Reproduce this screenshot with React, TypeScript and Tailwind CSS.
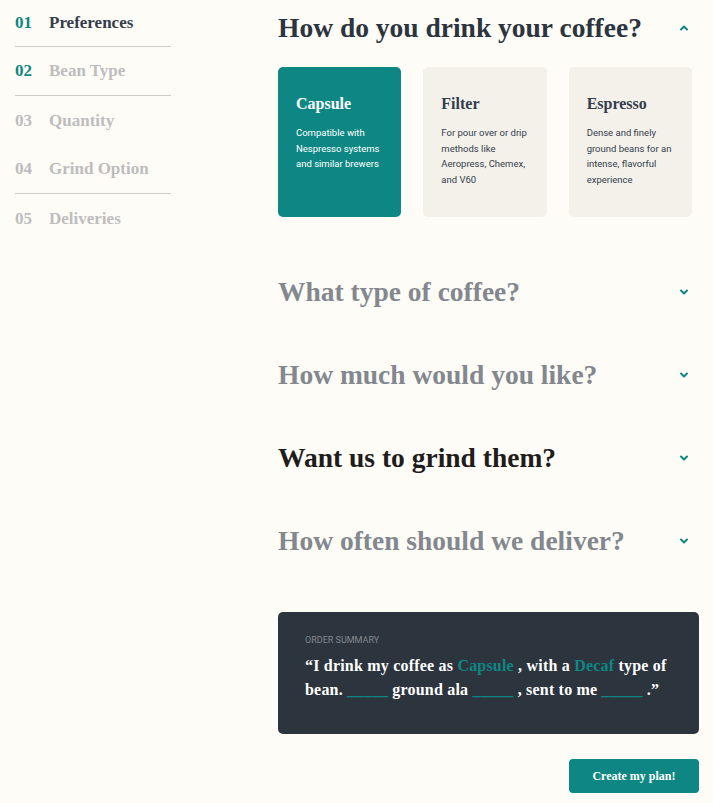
import { ChevronDown, ChevronUp } from 'lucide-react';

const serif = { fontFamily: '"Liberation Serif", "DejaVu Serif", serif' };

const steps = [
  { num: '01', label: 'Preferences', numOn: true, labelOn: true, line: true },
  { num: '02', label: 'Bean Type', numOn: true, labelOn: false, line: true },
  { num: '03', label: 'Quantity', numOn: false, labelOn: false, line: false },
  { num: '04', label: 'Grind Option', numOn: false, labelOn: false, line: true },
  { num: '05', label: 'Deliveries', numOn: false, labelOn: false, line: false },
];

const options = [
  { title: 'Capsule', text: 'Compatible with Nespresso systems and similar brewers', active: true },
  { title: 'Filter', text: 'For pour over or drip methods like Aeropress, Chemex, and V60', active: false },
  { title: 'Espresso', text: 'Dense and finely ground beans for an intense, flavorful experience', active: false },
];

const questions = [
  { q: 'What type of coffee?', dark: false },
  { q: 'How much would you like?', dark: false },
  { q: 'Want us to grind them?', dark: true },
  { q: 'How often should we deliver?', dark: false },
];

function Blank() {
  return <span className="text-[#0E8784]">_____</span>;
}

export default function App() {
  return (
    <div className="min-h-[803px] bg-[#FEFCF7] flex" style={{ fontFamily: 'Roboto, "Liberation Sans", sans-serif' }}>
      <aside className="w-[156px] ml-[15px] shrink-0">
        {steps.map((s) => (
          <div
            key={s.num}
            className={`flex items-center gap-[17px] ${s.line ? 'border-b border-[#CCCCCA]' : ''} ${s.num === '01' ? 'h-[47px]' : 'h-[49px]'}`}
            style={serif}
          >
            <span className={`text-[17px] font-bold ${s.numOn ? 'text-[#0E8784]' : 'text-[#BDBDBD]'}`}>{s.num}</span>
            <span className={`text-[17px] font-bold ${s.labelOn ? 'text-[#333D4B]' : 'text-[#BDBDBD]'}`}>{s.label}</span>
          </div>
        ))}
      </aside>

      <main className="ml-[107px] w-[421px] flex flex-col">
        <div className="flex items-center justify-between pr-[9px] pt-[12px]">
          <h2 className="text-[27.5px] font-bold text-[#2C343E] leading-[32px]" style={serif}>
            How do you drink your coffee?
          </h2>
          <ChevronUp className="w-[12px] h-[12px] text-[#0E8784]" strokeWidth={4} />
        </div>

        <div className="flex gap-[22px] mt-[23px] w-[414px]">
          {options.map((o) => (
            <div
              key={o.title}
              className={`w-[124px] h-[150px] rounded-[5px] px-[18px] pt-[27px] ${o.active ? 'bg-[#0E8784] text-white' : 'bg-[#F4F1EB] text-[#333D4B]'}`}
            >
              <div className="text-[16px] font-bold leading-[20px]" style={serif}>
                {o.title}
              </div>
              <p className="mt-[11px] text-[9.5px] leading-[15.5px]">{o.text}</p>
            </div>
          ))}
        </div>

        <div className="mt-[59px] flex flex-col gap-[51px]">
          {questions.map((q) => (
            <div key={q.q} className="flex items-center justify-between pr-[9px] h-[32px]">
              <h2
                className={`text-[27.5px] font-bold leading-[32px] ${q.dark ? 'text-[#1F1D1C]' : 'text-[#83888F]'}`}
                style={serif}
              >
                {q.q}
              </h2>
              <ChevronDown className="w-[12px] h-[12px] text-[#0E8784]" strokeWidth={4} />
            </div>
          ))}
        </div>

        <section className="mt-[55px] bg-[#2C343E] rounded-[5px] px-[27px] pt-[22px] pb-[32px]">
          <div className="text-[9px] uppercase text-[#83888F]">Order summary</div>
          <p className="mt-[6px] text-[16px] font-bold leading-[24px] text-white tracking-[0.2px]" style={serif}>
            “I drink my coffee as <span className="text-[#0E8784]">Capsule</span> , with a{' '}
            <span className="text-[#0E8784]">Decaf</span> type of bean. <Blank /> ground ala <Blank /> , sent to me{' '}
            <Blank /> .”
          </p>
        </section>

        <div className="flex justify-end mt-[25px]">
          <button
            className="w-[130px] h-[34px] rounded-[4px] bg-[#0E8784] text-white text-[12px] font-bold"
            style={serif}
          >
            Create my plan!
          </button>
        </div>
      </main>
    </div>
  );
}
